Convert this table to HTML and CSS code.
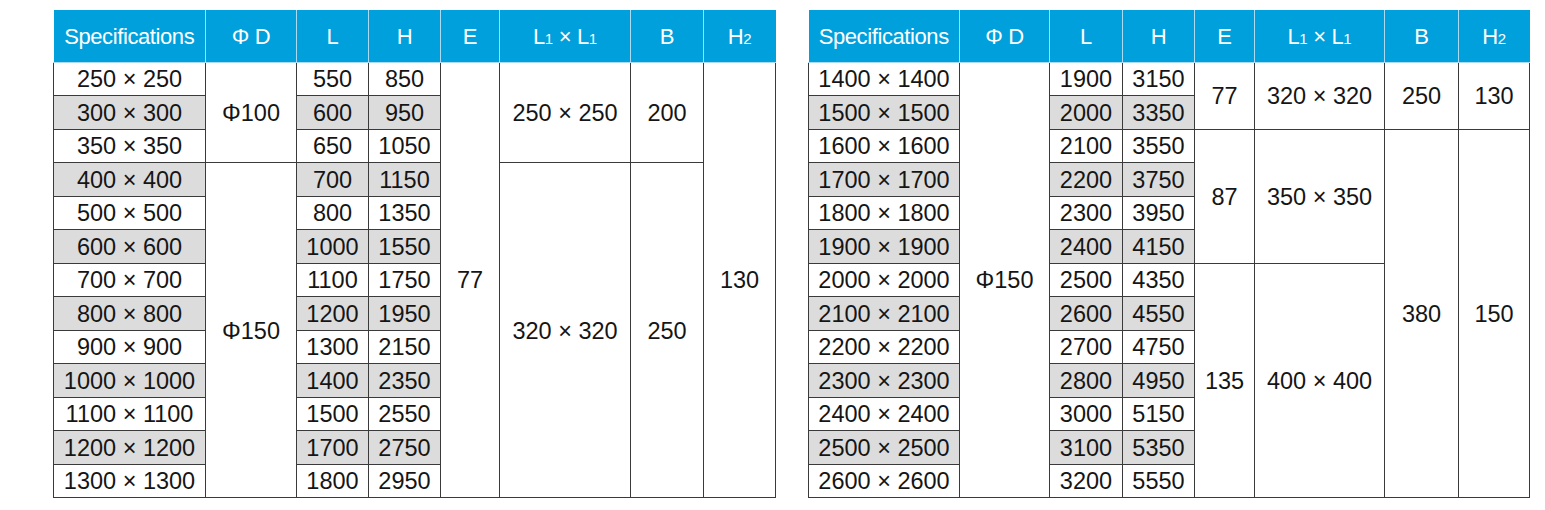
FILE: index.html
```html
<!DOCTYPE html>
<html>
<head>
<meta charset="utf-8">
<link rel="stylesheet" href="styles.css">
</head>
<body>
<div class="page">
  <table class="spec spec-left">
    <colgroup>
      <col class="c-spec"><col class="c-d"><col class="c-l"><col class="c-h"><col class="c-e"><col class="c-l1"><col class="c-b"><col class="c-h2">
    </colgroup>
    <thead>
      <tr><th class="hs">Specifications</th><th>Φ D</th><th>L</th><th>H</th><th>E</th><th>L<small>1</small> × L<small>1</small></th><th>B</th><th>H<small>2</small></th></tr>
    </thead>
    <tbody>
      <tr><td>250 × 250</td><td rowspan="3" class="m">Φ100</td><td>550</td><td>850</td><td rowspan="13" class="m">77</td><td rowspan="3" class="m">250 × 250</td><td rowspan="3" class="m">200</td><td rowspan="13" class="m">130</td></tr>
      <tr class="g"><td>300 × 300</td><td>600</td><td>950</td></tr>
      <tr><td>350 × 350</td><td>650</td><td>1050</td></tr>
      <tr class="g"><td>400 × 400</td><td rowspan="10" class="m">Φ150</td><td>700</td><td>1150</td><td rowspan="10" class="m">320 × 320</td><td rowspan="10" class="m">250</td></tr>
      <tr><td>500 × 500</td><td>800</td><td>1350</td></tr>
      <tr class="g"><td>600 × 600</td><td>1000</td><td>1550</td></tr>
      <tr><td>700 × 700</td><td>1100</td><td>1750</td></tr>
      <tr class="g"><td>800 × 800</td><td>1200</td><td>1950</td></tr>
      <tr><td>900 × 900</td><td>1300</td><td>2150</td></tr>
      <tr class="g"><td>1000 × 1000</td><td>1400</td><td>2350</td></tr>
      <tr><td>1100 × 1100</td><td>1500</td><td>2550</td></tr>
      <tr class="g"><td>1200 × 1200</td><td>1700</td><td>2750</td></tr>
      <tr><td>1300 × 1300</td><td>1800</td><td>2950</td></tr>
    </tbody>
  </table>

  <table class="spec spec-right">
    <colgroup>
      <col class="r-spec"><col class="r-d"><col class="r-l"><col class="r-h"><col class="r-e"><col class="r-l1"><col class="r-b"><col class="r-h2">
    </colgroup>
    <thead>
      <tr><th class="hs">Specifications</th><th>Φ D</th><th>L</th><th>H</th><th>E</th><th>L<small>1</small> × L<small>1</small></th><th>B</th><th>H<small>2</small></th></tr>
    </thead>
    <tbody>
      <tr><td>1400 × 1400</td><td rowspan="13" class="m">Φ150</td><td>1900</td><td>3150</td><td rowspan="2" class="m">77</td><td rowspan="2" class="m">320 × 320</td><td rowspan="2" class="m">250</td><td rowspan="2" class="m">130</td></tr>
      <tr class="g"><td>1500 × 1500</td><td>2000</td><td>3350</td></tr>
      <tr><td>1600 × 1600</td><td>2100</td><td>3550</td><td rowspan="4" class="m">87</td><td rowspan="4" class="m">350 × 350</td><td rowspan="11" class="m">380</td><td rowspan="11" class="m">150</td></tr>
      <tr class="g"><td>1700 × 1700</td><td>2200</td><td>3750</td></tr>
      <tr><td>1800 × 1800</td><td>2300</td><td>3950</td></tr>
      <tr class="g"><td>1900 × 1900</td><td>2400</td><td>4150</td></tr>
      <tr><td>2000 × 2000</td><td>2500</td><td>4350</td><td rowspan="7" class="m">135</td><td rowspan="7" class="m">400 × 400</td></tr>
      <tr class="g"><td>2100 × 2100</td><td>2600</td><td>4550</td></tr>
      <tr><td>2200 × 2200</td><td>2700</td><td>4750</td></tr>
      <tr class="g"><td>2300 × 2300</td><td>2800</td><td>4950</td></tr>
      <tr><td>2400 × 2400</td><td>3000</td><td>5150</td></tr>
      <tr class="g"><td>2500 × 2500</td><td>3100</td><td>5350</td></tr>
      <tr><td>2600 × 2600</td><td>3200</td><td>5550</td></tr>
    </tbody>
  </table>
</div>
</body>
</html>
```

FILE: styles.css
```css
html, body {
  margin: 0;
  padding: 0;
  background: #ffffff;
}

.page {
  display: flex;
  align-items: flex-start;
  gap: 32px;
  padding: 10px 0 0 53px;
  font-family: "Liberation Sans", Arial, sans-serif;
}

.spec {
  border-collapse: collapse;
  table-layout: fixed;
  color: #151515;
}

.spec-left { width: 722px; }
.spec-right { width: 721px; }

.c-spec { width: 152px; }
.c-d { width: 91px; }
.c-l { width: 72px; }
.c-h { width: 72px; }
.c-e { width: 59px; }
.c-l1 { width: 131px; }
.c-b { width: 73px; }
.c-h2 { width: 72px; }

.r-spec { width: 151px; }
.r-d { width: 90px; }
.r-l { width: 73px; }
.r-h { width: 72px; }
.r-e { width: 60px; }
.r-l1 { width: 130px; }
.r-b { width: 74px; }
.r-h2 { width: 71px; }

.spec thead tr {
  height: 52px;
}

.spec th {
  background: #00a0dd;
  color: #ffffff;
  font-weight: normal;
  font-size: 22px;
  letter-spacing: -0.4px;
  padding: 3px 0 0;
  text-align: center;
  vertical-align: middle;
  border: 1px solid #a9dbf2;
  border-top: none;
}

.spec th:first-child { border-left: none; }
.spec th:last-child { border-right: none; }

.spec th small {
  font-size: 15px;
  letter-spacing: 0;
}

.spec tbody tr {
  height: 33.5px;
}

.spec td {
  padding: 2px 0 0;
  font-size: 23.5px;
  text-align: center;
  vertical-align: middle;
  border: 1px solid #3a3a3a;
  background: #ffffff;
  white-space: nowrap;
}

.spec tr.g td {
  background: #dcdcdc;
}

.spec tr.g td.m {
  background: #ffffff;
}
```
